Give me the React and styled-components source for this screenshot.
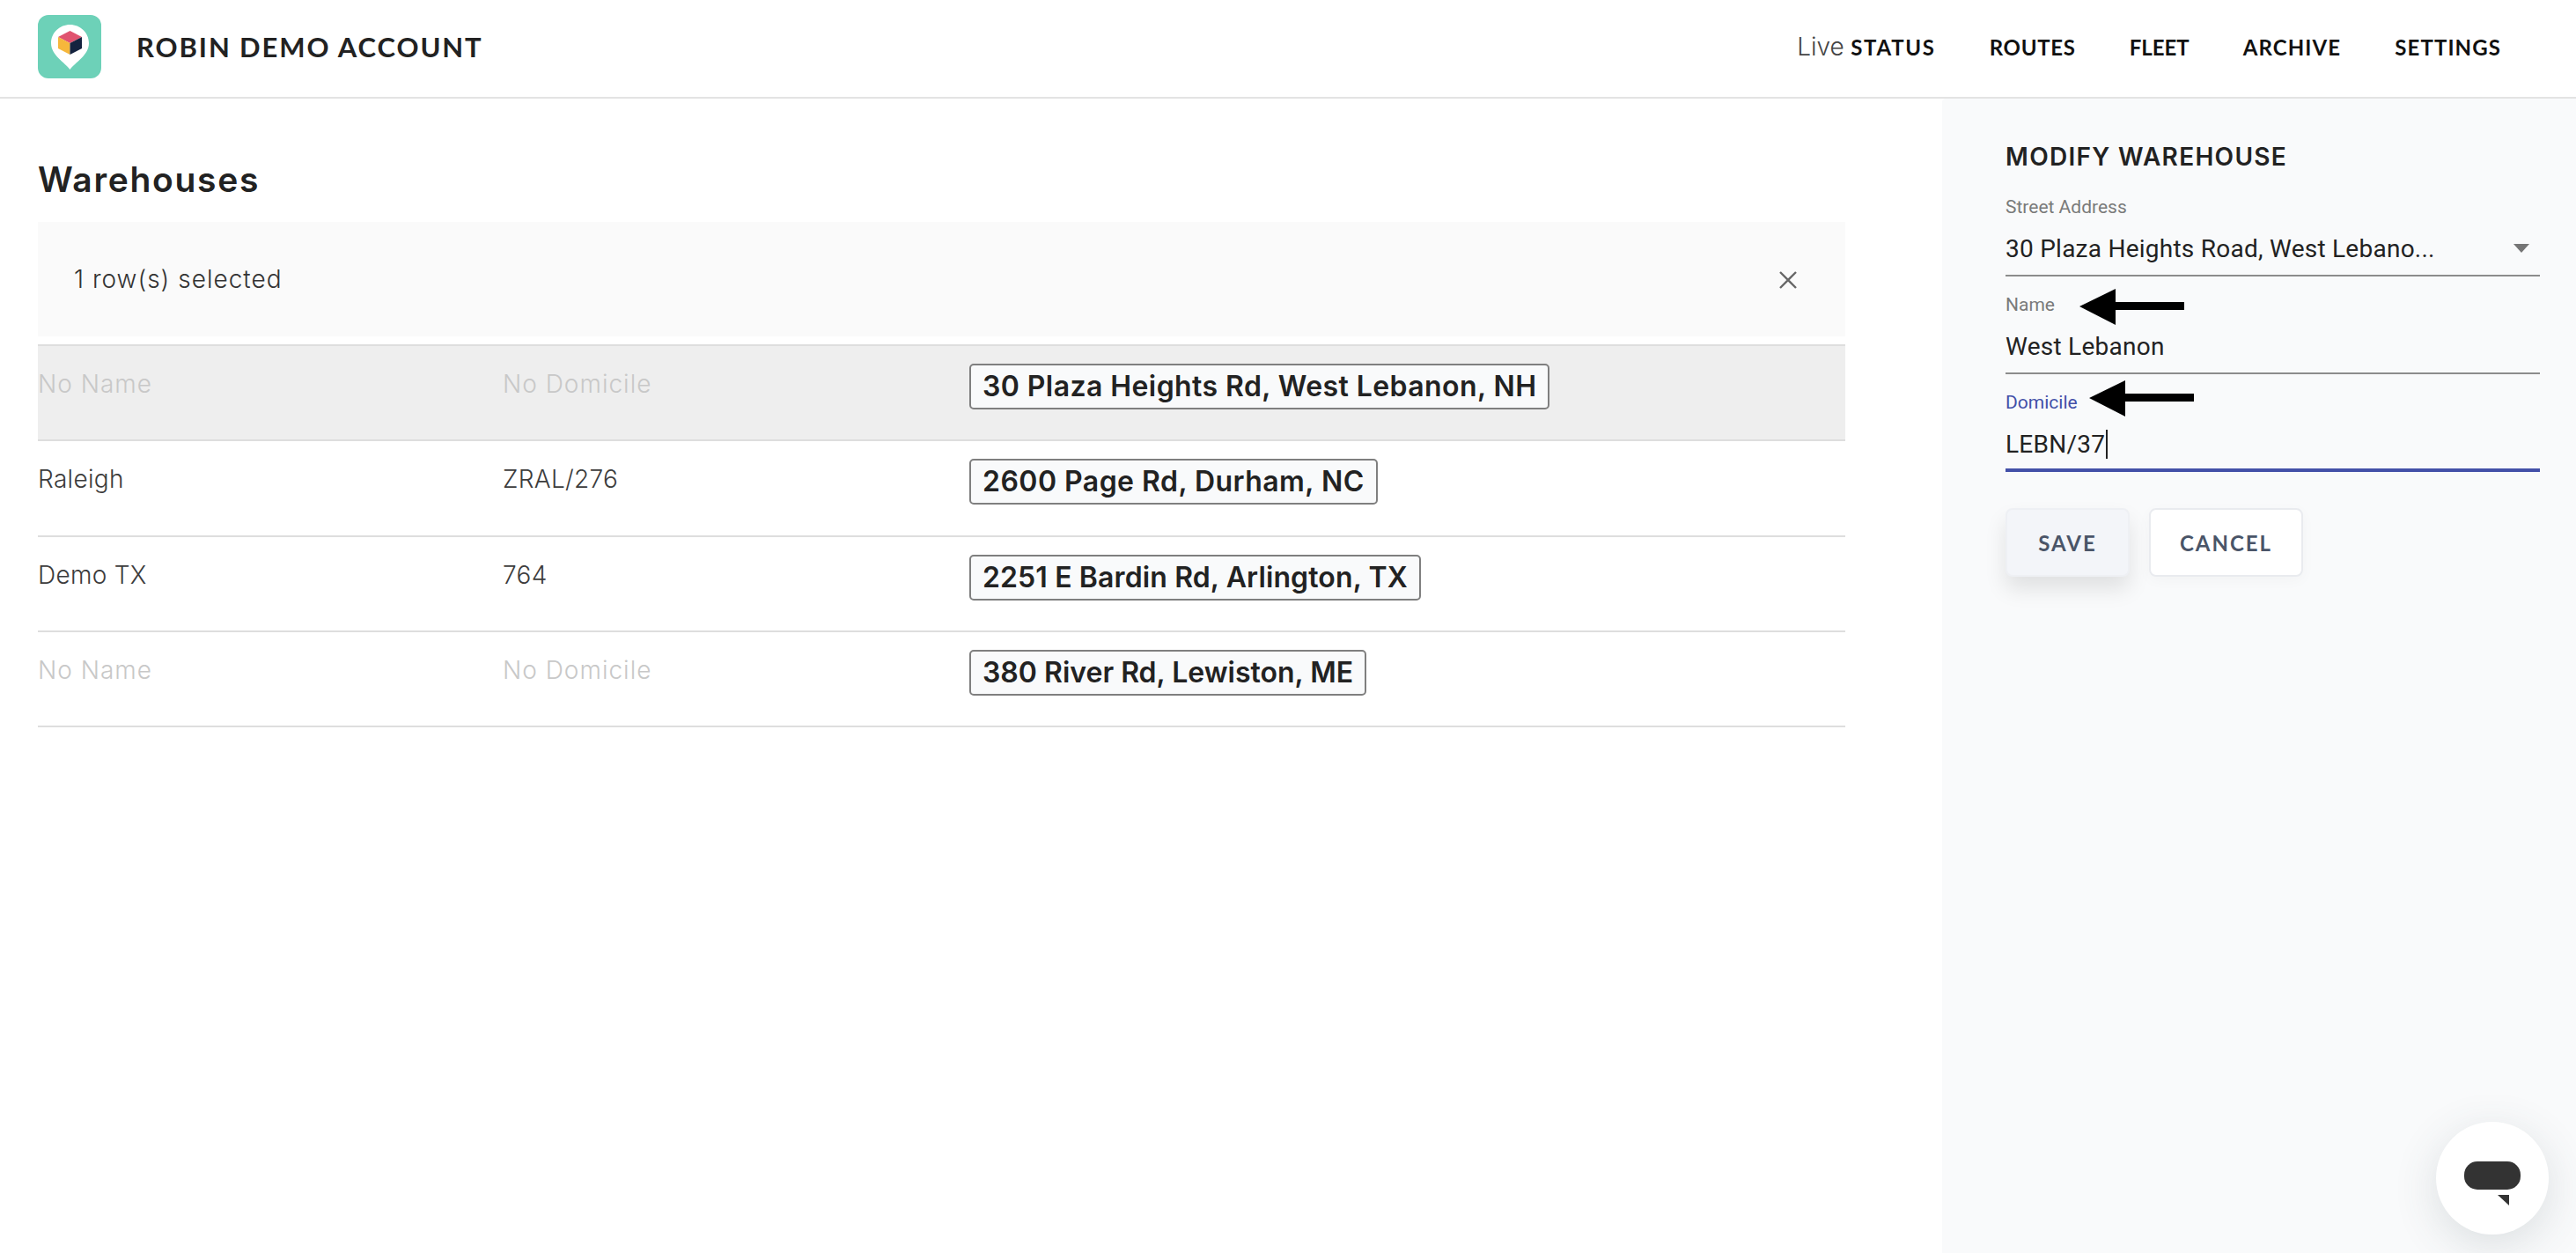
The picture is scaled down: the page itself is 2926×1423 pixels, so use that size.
import React from "react";
import styled, { createGlobalStyle } from "styled-components";

const rows = [
  { name: "", domicile: "", address: "30 Plaza Heights Rd, West Lebanon, NH", spacing: 0.42, selected: true },
  { name: "Raleigh", domicile: "ZRAL/276", address: "2600 Page Rd, Durham, NC", spacing: 0.46 },
  { name: "Demo TX", domicile: "764", address: "2251 E Bardin Rd, Arlington, TX", spacing: 0.12 },
  { name: "", domicile: "", address: "380 River Rd, Lewiston, ME", spacing: 0 },
];

const navItems = [
  { label: "ROUTES", spacing: 0.7 },
  { label: "FLEET", spacing: 0 },
  { label: "ARCHIVE", spacing: 1.1 },
  { label: "SETTINGS", spacing: 1.1 },
];

const App = () => {
  return (
    <Page>
      <GlobalStyle />
      <Header>
        <Brand>
          <Logo />
          <BrandName>ROBIN DEMO ACCOUNT</BrandName>
        </Brand>
        <Nav>
          <NavLink $spacing={1.7}>
            <LiveWord>Live</LiveWord> STATUS
          </NavLink>
          {navItems.map((item) => (
            <NavLink key={item.label} $spacing={item.spacing}>
              {item.label}
            </NavLink>
          ))}
        </Nav>
      </Header>
      <Main>
        <Content>
          <Title>Warehouses</Title>
          <SelectionBar>
            <SelectionText>1 row(s) selected</SelectionText>
            <CloseIcon />
          </SelectionBar>
          <Table>
            {rows.map((row) => (
              <Row key={row.address} $selected={row.selected}>
                <Cell $empty={!row.name}>{row.name || "No Name"}</Cell>
                <Cell $empty={!row.domicile}>{row.domicile || "No Domicile"}</Cell>
                <AddressCell>
                  <AddressChip $spacing={row.spacing}>{row.address}</AddressChip>
                </AddressCell>
              </Row>
            ))}
          </Table>
        </Content>
        <Panel>
          <PanelTitle>MODIFY WAREHOUSE</PanelTitle>
          <Field>
            <FieldLabel>Street Address</FieldLabel>
            <FieldValue>
              <span>30 Plaza Heights Road, West Lebano...</span>
              <SelectCaret />
            </FieldValue>
          </Field>
          <Field>
            <FieldLabel>Name</FieldLabel>
            <NameArrow />
            <FieldValue>West Lebanon</FieldValue>
          </Field>
          <Field $focused>
            <FieldLabel $focused>Domicile</FieldLabel>
            <DomicileArrow />
            <FieldValue $focused>
              LEBN/37
              <TextCursor />
            </FieldValue>
          </Field>
          <Actions>
            <ActionButton $primary>SAVE</ActionButton>
            <ActionButton>CANCEL</ActionButton>
          </Actions>
        </Panel>
      </Main>
      <ChatButton>
        <svg width="64" height="50" viewBox="0 0 64 50">
          <rect width="64" height="32" rx="15" fill="#333" />
          <path d="M38 38h13v12z" fill="#333" />
        </svg>
      </ChatButton>
    </Page>
  );
};

const Logo = () => (
  <svg width="72" height="72" viewBox="0 0 72 72">
    <rect width="72" height="72" rx="12" fill="#6dd1b8" />
    <path d="M36.5 62 C31 54 15 46 15 32 C15 20 25 11 36.5 11 C48 11 58 20 58 32 C58 46 42 54 36.5 62z" fill="#fff" />
    <path d="M36.5 18 50 25 36.5 32 23 25z" fill="#e0536f" />
    <path d="M23 25 36.5 32V45L23 38z" fill="#f6b73c" />
    <path d="M50 25 36.5 32V45L50 38z" fill="#14233f" />
  </svg>
);

const CloseIcon = () => (
  <CloseSvg width="22" height="22" viewBox="0 0 22 22">
    <path d="M2 2l18 18M20 2L2 20" stroke="#666" strokeWidth="2.4" fill="none" />
  </CloseSvg>
);

const SelectCaret = () => (
  <CaretSvg width="18" height="10" viewBox="0 0 18 10">
    <path d="M0 0h18L9 10z" fill="#757575" />
  </CaretSvg>
);

const ArrowShape = () => <path d="M0 20 41 0V15H119V24H41V41z" fill="#000" />;

const NameArrow = () => (
  <NameArrowSvg width="119" height="41" viewBox="0 0 119 41">
    <ArrowShape />
  </NameArrowSvg>
);

const DomicileArrow = () => (
  <DomicileArrowSvg width="119" height="41" viewBox="0 0 119 41">
    <ArrowShape />
  </DomicileArrowSvg>
);

const GlobalStyle = createGlobalStyle`
  * {
    box-sizing: border-box;
  }
  html, body {
    margin: 0;
    padding: 0;
    background: #fff;
  }
`;

const Page = styled.div`
  width: 2926px;
  height: 1423px;
  display: flex;
  flex-direction: column;
  overflow: hidden;
  font-family: Inter, "Liberation Sans", sans-serif;
  color: #222;
`;

const Header = styled.header`
  height: 112px;
  flex: none;
  display: flex;
  align-items: center;
  justify-content: space-between;
  padding: 0 85px 4px 43px;
  border-bottom: 2px solid #e3e3e3;
`;

const Brand = styled.div`
  display: flex;
  align-items: center;
  gap: 40px;
`;

const BrandName = styled.div`
  font-family: Lato, sans-serif;
  font-size: 31px;
  font-weight: 700;
  letter-spacing: 1.9px;
  color: #222;
`;

const Nav = styled.nav`
  display: flex;
  align-items: center;
  gap: 61px;
`;

const NavLink = styled.div`
  font-family: Lato, sans-serif;
  font-size: 24px;
  font-weight: 700;
  letter-spacing: ${(props) => props.$spacing}px;
  color: #111;
  white-space: nowrap;
`;

const LiveWord = styled.span`
  font-family: Inter, sans-serif;
  font-size: 28px;
  font-weight: 300;
  letter-spacing: 0;
  color: #444;
`;

const Main = styled.main`
  flex: 1;
  display: flex;
  min-height: 0;
`;

const Content = styled.section`
  flex: 1;
  padding: 67px 110px 0 43px;
`;

const Title = styled.h1`
  margin: 0 0 23px;
  font-size: 39px;
  line-height: 50px;
  font-weight: 600;
  letter-spacing: 1.7px;
  color: #222;
`;

const SelectionBar = styled.div`
  height: 130px;
  display: flex;
  align-items: center;
  justify-content: space-between;
  padding: 0 54px 0 41px;
  background: #fafafa;
`;

const SelectionText = styled.div`
  font-size: 28px;
  font-weight: 300;
  letter-spacing: 1px;
  color: #333;
`;

const CloseSvg = styled.svg`
  display: block;
  margin-top: 2px;
`;

const Table = styled.div`
  margin-top: 9px;
  border-top: 2px solid #dedede;
`;

const Row = styled.div`
  height: 108.3px;
  display: grid;
  grid-template-columns: 528px 530px 1fr;
  border-bottom: 2px solid #dedede;
  background: ${(props) => (props.$selected ? "#eeeeee" : "#fff")};
`;

const Cell = styled.div`
  padding-top: 26px;
  font-size: 28px;
  line-height: 34px;
  font-weight: 300;
  letter-spacing: ${(props) => (props.$empty ? "1px" : "0.3px")};
  color: ${(props) => (props.$empty ? "#c8c8c8" : "#3c3c3c")};
`;

const AddressCell = styled.div`
  padding-top: 20px;
`;

const AddressChip = styled.span`
  display: inline-block;
  height: 52px;
  padding: 0 13px;
  font-size: 32px;
  line-height: 48px;
  font-weight: 600;
  letter-spacing: ${(props) => props.$spacing}px;
  color: #222;
  background: #f9fafb;
  border: 2px solid #7f7f7f;
  border-radius: 5px;
  white-space: nowrap;
`;

const Panel = styled.aside`
  width: 720px;
  flex: none;
  padding: 49px 41px 0 72px;
  background: #f9fafb;
  border-top-left-radius: 4px;
`;

const PanelTitle = styled.h2`
  margin: 0 0 28px;
  font-size: 28px;
  line-height: 34px;
  font-weight: 600;
  letter-spacing: 1.3px;
  color: #222;
`;

const Field = styled.div`
  position: relative;
  margin-bottom: 20px;
`;

const FieldLabel = styled.div`
  font-family: Roboto, sans-serif;
  font-size: 21px;
  line-height: 24px;
  color: ${(props) => (props.$focused ? "#4350a8" : "#7a7a7a")};
`;

const FieldValue = styled.div`
  height: 67px;
  padding-top: 19px;
  display: flex;
  align-items: flex-start;
  justify-content: ${(props) => (props.$focused ? "flex-start" : "space-between")};
  font-family: Roboto, sans-serif;
  font-size: 28px;
  line-height: 34px;
  letter-spacing: 0.25px;
  color: #222;
  border-bottom: ${(props) => (props.$focused ? "4px solid #4350a8" : "2px solid #8c8c8c")};
`;

const CaretSvg = styled.svg`
  margin: 11px 12px 0 0;
`;

const TextCursor = styled.i`
  display: block;
  width: 2px;
  height: 33px;
  margin-left: 1px;
  background: #222;
`;

const NameArrowSvg = styled.svg`
  position: absolute;
  left: 84px;
  top: -6px;
`;

const DomicileArrowSvg = styled.svg`
  position: absolute;
  left: 95px;
  top: -13px;
`;

const Actions = styled.div`
  display: flex;
  gap: 22px;
  margin-top: 41px;
`;

const ActionButton = styled.button`
  width: ${(props) => (props.$primary ? "141px" : "175px")};
  height: 78px;
  padding: 0;
  font-family: Lato, sans-serif;
  font-size: 24px;
  font-weight: 700;
  letter-spacing: 2px;
  color: #4a5568;
  background: ${(props) => (props.$primary ? "#f3f5f9" : "#fff")};
  border: 2px solid ${(props) => (props.$primary ? "#eef0f4" : "#e9ebef")};
  border-radius: 8px;
  box-shadow: ${(props) =>
    props.$primary ? "0 14px 24px rgba(0, 0, 0, 0.1)" : "0 4px 16px rgba(0, 0, 0, 0.03)"};
`;

const ChatButton = styled.div`
  position: fixed;
  left: 2767px;
  top: 1274px;
  width: 128px;
  height: 128px;
  padding-top: 45px;
  display: flex;
  justify-content: center;
  border-radius: 50%;
  background: #fff;
  box-shadow: 0 12px 50px rgba(60, 80, 90, 0.16);
`;

export default App;
